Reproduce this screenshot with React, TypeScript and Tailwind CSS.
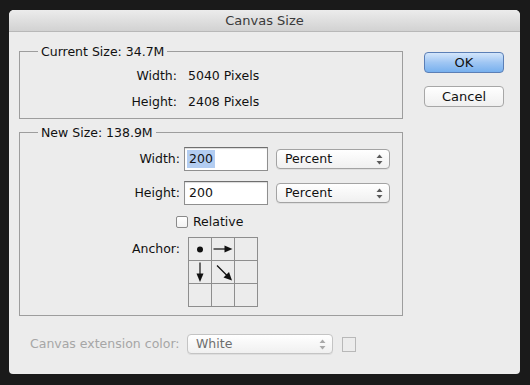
import type { ReactNode } from 'react';

function UpDown({ muted = false }: { muted?: boolean }) {
  const c = muted ? '#a9a9a9' : '#5a5a5a';
  return (
    <svg width="7" height="11" viewBox="0 0 7 11">
      <path d="M3.5 0.5 L6.5 4 L0.5 4 Z" fill={c} />
      <path d="M3.5 10.5 L6.5 7 L0.5 7 Z" fill={c} />
    </svg>
  );
}

function PopUp({ value, disabled = false, className }: { value: string; disabled?: boolean; className: string }) {
  return (
    <div
      className={`flex h-[20px] items-center justify-between rounded-[4px] border bg-gradient-to-b from-white to-[#f0f0f0] pl-[8px] pr-[6px] shadow-[0_1px_0_rgba(0,0,0,0.06)] ${
        disabled ? 'border-[#c4c4c4] text-[#6e6e6e]' : 'border-[#a3a3a3] text-[#111]'
      } ${className}`}
    >
      <span>{value}</span>
      <UpDown muted={disabled} />
    </div>
  );
}

function TextBox({ value, selected = false }: { value: string; selected?: boolean }) {
  return (
    <div className="flex h-[24px] w-[84px] items-center border border-[#8f8f8f] border-t-[#6f6f6f] bg-white pl-[2px] shadow-[inset_0_1px_1px_rgba(0,0,0,0.15)]">
      <span className={`px-[2px] leading-[18px] ${selected ? 'bg-[#b3cdf1]' : ''}`}>{value}</span>
    </div>
  );
}

function Cell({ children }: { children?: ReactNode }) {
  return <div className="flex h-[23px] w-[23px] items-center justify-center border-r border-b border-[#8e8e8e]">{children}</div>;
}

function AnchorGrid() {
  return (
    <div className="grid w-[70px] grid-cols-3 border-l border-t border-[#8e8e8e]">
      <Cell>
        <svg width="22" height="22" viewBox="0 0 22 22">
          <circle cx="11" cy="11.5" r="3" fill="#111" />
        </svg>
      </Cell>
      <Cell>
        <svg width="22" height="22" viewBox="0 0 22 22">
          <path d="M1.5 11 H14" stroke="#111" strokeWidth="1.2" />
          <path d="M12.5 7.5 L20.5 11 L12.5 14.5 Z" fill="#111" />
        </svg>
      </Cell>
      <Cell />
      <Cell>
        <svg width="22" height="22" viewBox="0 0 22 22">
          <path d="M11 1.5 V14" stroke="#111" strokeWidth="1.2" />
          <path d="M7.5 12.5 L11 21 L14.5 12.5 Z" fill="#111" />
        </svg>
      </Cell>
      <Cell>
        <svg width="22" height="22" viewBox="0 0 22 22">
          <path d="M5 4.5 L15 14.5" stroke="#111" strokeWidth="1.3" />
          <path d="M11.5 16.5 L20 19.5 L17 11 Z" fill="#111" />
        </svg>
      </Cell>
      <Cell />
      <Cell />
      <Cell />
      <Cell />
    </div>
  );
}

export default function App() {
  return (
    <div className="h-[385px] w-[530px] overflow-hidden bg-[#1a1a1a] pl-[9px] pt-[10px] font-['DejaVu_Sans',sans-serif] text-[12.5px] text-[#111]">
      <div className="flex h-[364px] w-[511px] flex-col rounded-t-[5px] rounded-b-[4px] bg-[#ececec]">
        {/* title bar */}
        <div className="flex h-[22px] items-center justify-center rounded-t-[5px] border-b border-[#b8b8b8] bg-gradient-to-b from-[#ececec] to-[#d2d2d2] text-[13px] text-[#3a3a3a]">
          Canvas Size
        </div>

        <div className="flex pl-[10px]">
          {/* left column */}
          <div className="flex w-[384px] flex-col">
            <fieldset className="mt-[12px] border border-[#9d9d9d] pb-[8px] pt-[9px]">
              <legend className="ml-[18px] px-[3px] leading-[15px]">Current Size: 34.7M</legend>
              <div className="flex h-[16px] items-center">
                <span className="w-[157px] text-right">Width:</span>
                <span className="ml-[11px]">5040 Pixels</span>
              </div>
              <div className="mt-[10px] flex h-[16px] items-center">
                <span className="w-[157px] text-right">Height:</span>
                <span className="ml-[11px]">2408 Pixels</span>
              </div>
            </fieldset>

            <fieldset className="mt-[6px] border border-[#9d9d9d] pb-[8px] pt-[7px]">
              <legend className="ml-[18px] px-[3px] leading-[15px]">New Size: 138.9M</legend>
              <div className="flex h-[24px] items-center">
                <span className="w-[160px] text-right">Width:</span>
                <div className="ml-[4px]">
                  <TextBox value="200" selected />
                </div>
                <PopUp value="Percent" className="ml-[8px] w-[114px]" />
              </div>
              <div className="mt-[10px] flex h-[24px] items-center">
                <span className="w-[160px] text-right">Height:</span>
                <div className="ml-[4px]">
                  <TextBox value="200" />
                </div>
                <PopUp value="Percent" className="ml-[8px] w-[114px]" />
              </div>
              <div className="mt-[9px] flex h-[16px] items-center pl-[156px]">
                <span className="h-[12px] w-[12px] rounded-[2px] border border-[#8a8a8a] bg-gradient-to-b from-white to-[#f2f2f2]" />
                <span className="ml-[5px]">Relative</span>
              </div>
              <div className="mt-[7px] flex">
                <span className="w-[160px] pt-[3px] text-right">Anchor:</span>
                <div className="ml-[8px]">
                  <AnchorGrid />
                </div>
              </div>
            </fieldset>
          </div>

          {/* buttons */}
          <div className="ml-[21px] flex flex-col pt-[20px]">
            <button className="h-[21px] w-[80px] rounded-[4px] border border-[#5b7fb6] bg-gradient-to-b from-[#d4e6fb] via-[#9fc6f3] to-[#77b0ee] text-[13px] text-[#111]">
              OK
            </button>
            <button className="mt-[13px] h-[21px] w-[80px] rounded-[4px] border border-[#a7a7a7] bg-gradient-to-b from-white to-[#efefef] text-[13px] text-[#111]">
              Cancel
            </button>
          </div>
        </div>

        <div className="mt-[18px] flex h-[20px] items-center pl-[21px]">
          <span className="w-[150px] whitespace-nowrap text-[#a6a6a6]">Canvas extension color:</span>
          <PopUp value="White" disabled className="ml-[7px] w-[146px]" />
          <span className="ml-[9px] h-[15px] w-[14px] border border-[#b8b8b8] bg-[#ececec]" />
        </div>
      </div>
    </div>
  );
}
